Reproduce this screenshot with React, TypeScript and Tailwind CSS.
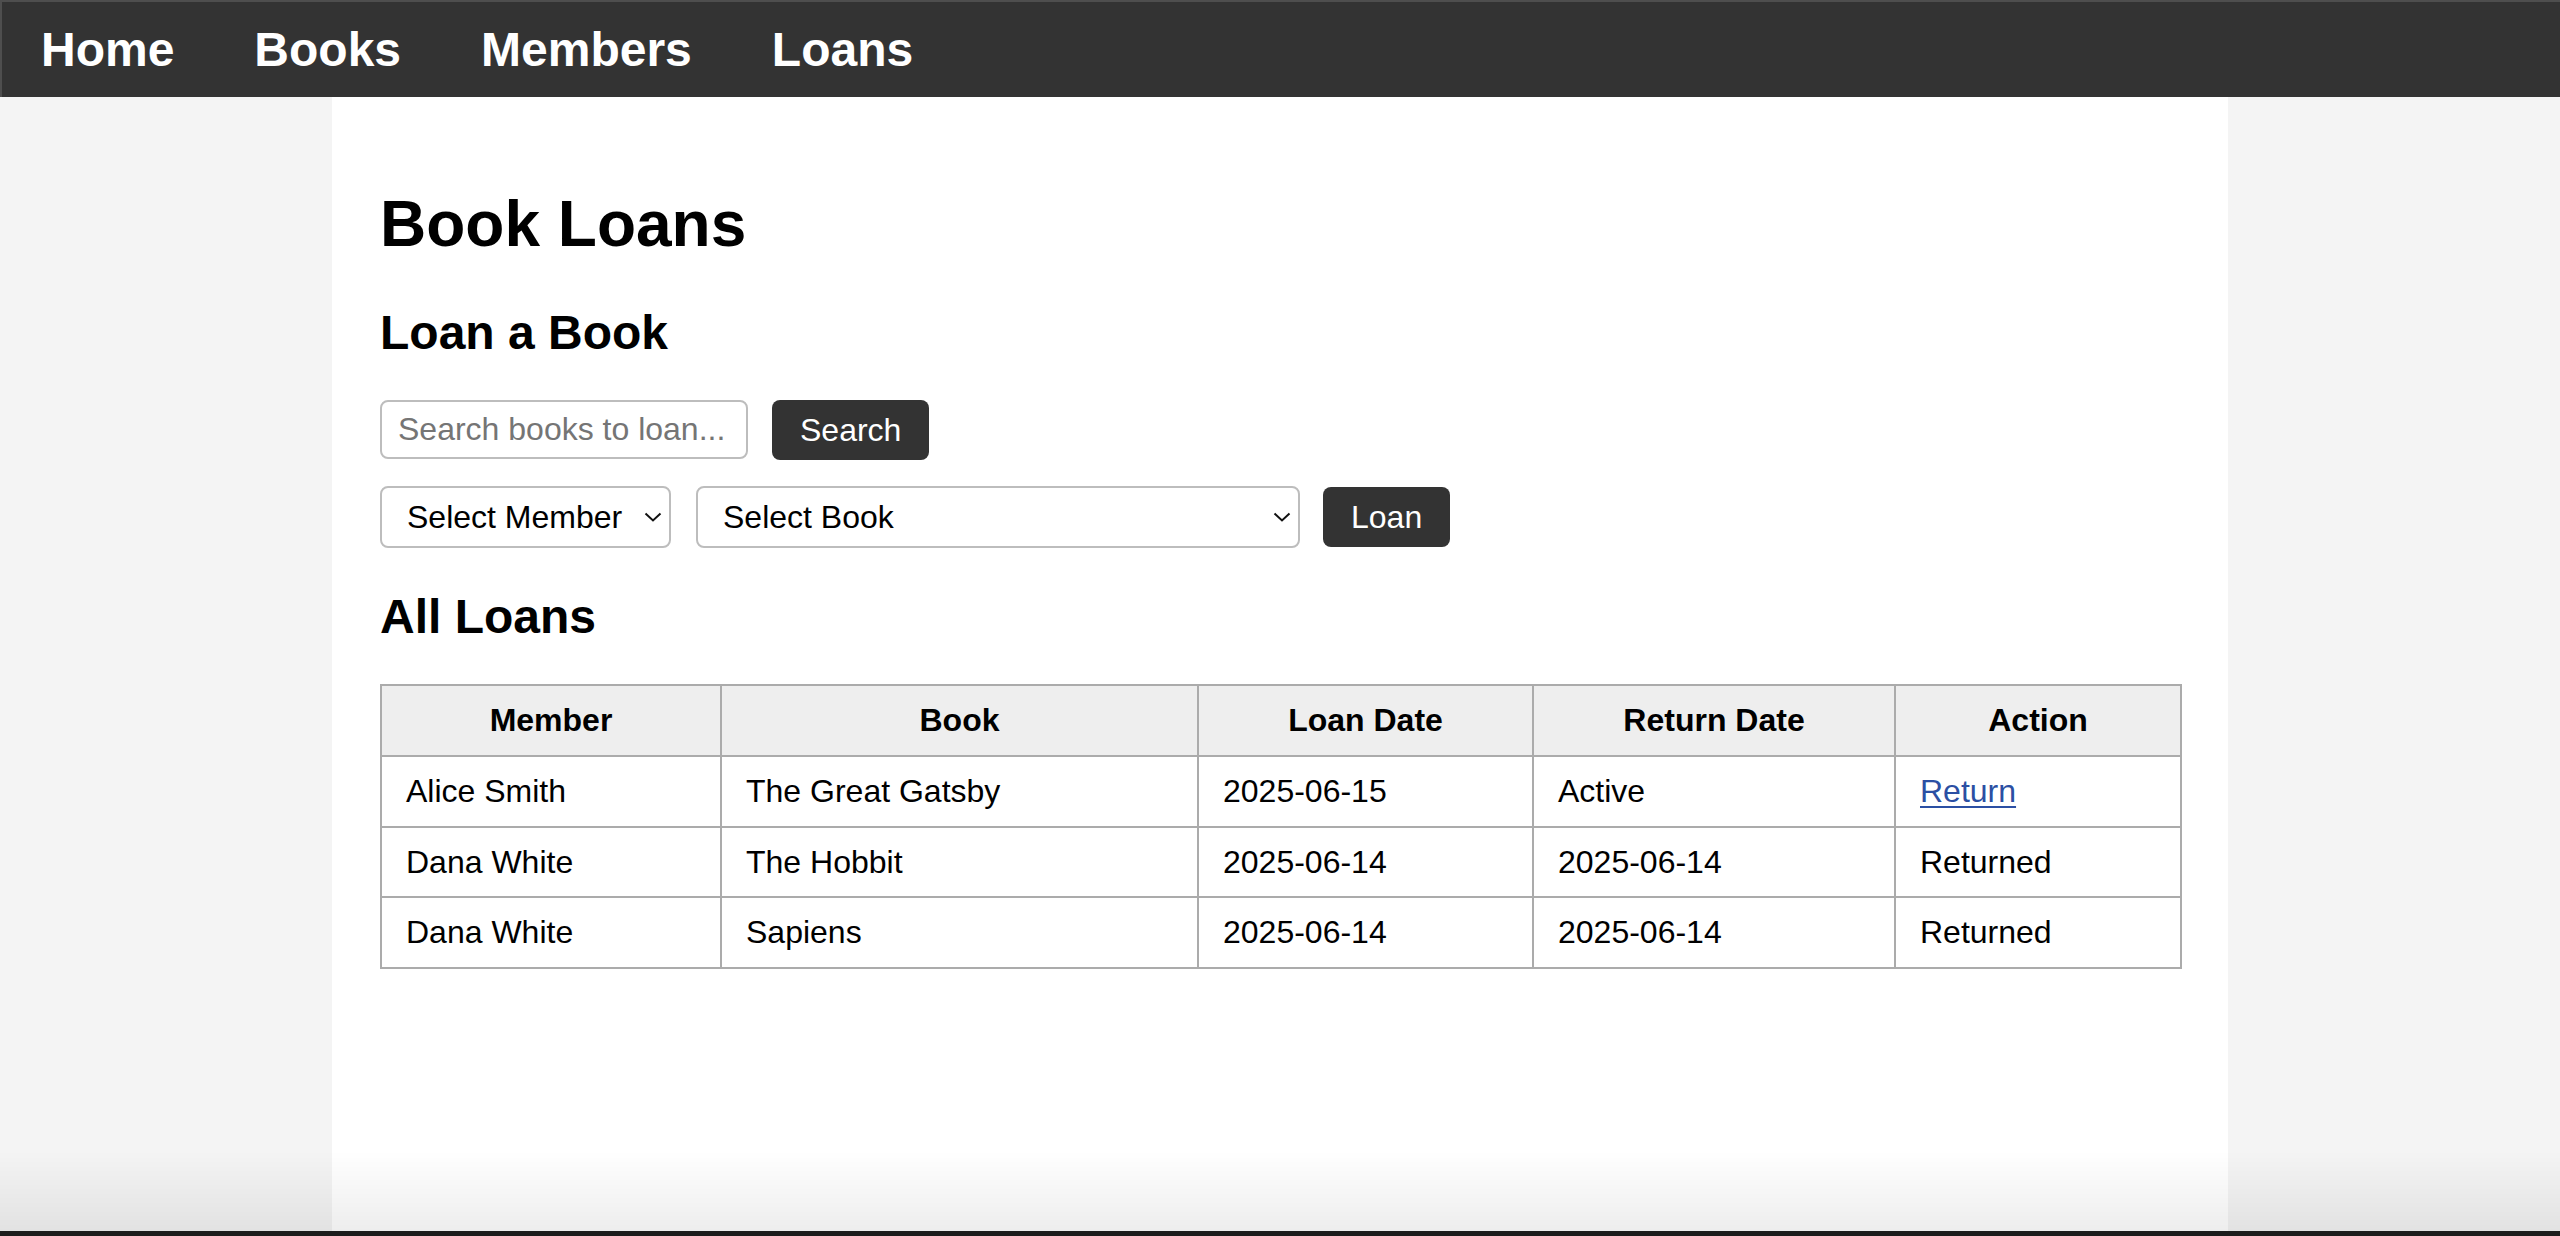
import React from 'react';

const navLinks = ['Home', 'Books', 'Members', 'Loans'];

const loans = [
  { member: 'Alice Smith', book: 'The Great Gatsby', loanDate: '2025-06-15', returnDate: 'Active', returned: false },
  { member: 'Dana White', book: 'The Hobbit', loanDate: '2025-06-14', returnDate: '2025-06-14', returned: true },
  { member: 'Dana White', book: 'Sapiens', loanDate: '2025-06-14', returnDate: '2025-06-14', returned: true }
];

const Chevron = () => (
  <svg
    className="pointer-events-none absolute right-[9px] top-1/2 -translate-y-1/2"
    width="18"
    height="10"
    viewBox="0 0 18 10"
    fill="none"
  >
    <path d="M1.5 1.5 L9 8.5 L16.5 1.5" stroke="#111" strokeWidth="2" />
  </svg>
);

const SelectBox = ({ label, width }: { label: string; width: string }) => (
  <div className={`relative ${width}`}>
    <select className="h-[62px] w-full appearance-none rounded-[8px] border-2 border-[#bdbdbd] bg-white pl-[25px] pr-[40px] text-[32px] text-black outline-none">
      <option>{label}</option>
    </select>
    <Chevron />
  </div>
);

const cell = 'border-2 border-[#ababab] px-[24px] py-[16px]';

const App = () => {
  return (
    <div className="flex min-h-screen flex-col bg-[#f4f4f4] font-['Liberation_Sans',Arial,sans-serif] text-black">
      {/* top bar */}
      <nav className="flex h-[97px] items-center gap-[80px] border-l-2 border-t-2 border-[#4e4e4e] bg-[#333333] pl-[39px]">
        {navLinks.map((link) => (
          <a key={link} href="#" className="text-[48px] font-bold leading-none text-white">
            {link}
          </a>
        ))}
      </nav>

      <main className="mx-auto w-[1896px] flex-1 bg-white px-[48px] pt-[48px]">
        <h1 className="mb-[43px] mt-[43px] text-[64px] font-bold leading-[1.15]">Book Loans</h1>

        <h2 className="mb-[40px] text-[48px] font-bold leading-[1.15]">Loan a Book</h2>

        <div className="flex items-center gap-[24px]">
          <input
            type="text"
            placeholder="Search books to loan..."
            className="h-[59px] w-[368px] rounded-[8px] border-2 border-[#bdbdbd] px-[16px] text-[32px] outline-none placeholder:text-[#757575]"
          />
          <button className="h-[60px] rounded-[8px] bg-[#333333] px-[28px] text-[32px] text-white">Search</button>
        </div>

        <div className="mt-[26px] flex items-center">
          <SelectBox label="Select Member" width="w-[291px]" />
          <div className="ml-[25px]">
            <SelectBox label="Select Book" width="w-[604px]" />
          </div>
          <button className="ml-[23px] h-[60px] rounded-[8px] bg-[#333333] px-[28px] text-[32px] text-white">Loan</button>
        </div>

        <h2 className="mb-[40px] mt-[41px] text-[48px] font-bold leading-[1.15]">All Loans</h2>

        <table className="w-full table-fixed border-collapse border-2 border-[#ababab] text-[32px] leading-[1.15]">
          <thead>
            <tr className="bg-[#eeeeee]">
              <th className={`${cell} w-[340px] text-center font-bold`}>Member</th>
              <th className={`${cell} w-[477px] text-center font-bold`}>Book</th>
              <th className={`${cell} w-[335px] text-center font-bold`}>Loan Date</th>
              <th className={`${cell} w-[362px] text-center font-bold`}>Return Date</th>
              <th className={`${cell} w-[286px] text-center font-bold`}>Action</th>
            </tr>
          </thead>
          <tbody>
            {loans.map((loan, i) => (
              <tr key={i}>
                <td className={cell}>{loan.member}</td>
                <td className={cell}>{loan.book}</td>
                <td className={cell}>{loan.loanDate}</td>
                <td className={cell}>{loan.returnDate}</td>
                <td className={cell}>
                  {loan.returned ? (
                    'Returned'
                  ) : (
                    <a href="#" className="text-[#2b4fa3] underline decoration-2 underline-offset-[4px]">
                      Return
                    </a>
                  )}
                </td>
              </tr>
            ))}
          </tbody>
        </table>
      </main>

      {/* window bottom shading */}
      <div className="pointer-events-none fixed inset-x-0 bottom-0">
        <div className="h-[80px] bg-gradient-to-b from-transparent to-black/[0.07]" />
        <div className="h-[5px] bg-[#1c1c1c]" />
      </div>
    </div>
  );
};

export default App;
